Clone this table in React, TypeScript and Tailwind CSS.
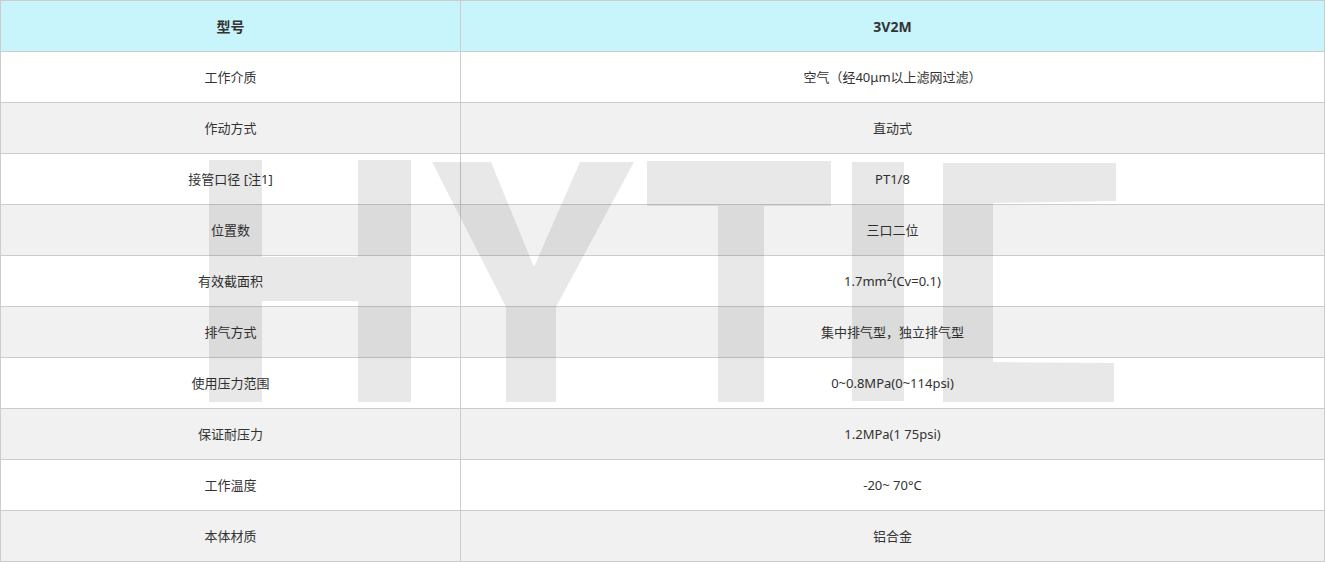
import React from "react";

const rows: [string, React.ReactNode][] = [
  ["工作介质", "空气（经40μm以上滤网过滤）"],
  ["作动方式", "直动式"],
  ["接管口径 [注1]", "PT1/8"],
  ["位置数", "三口二位"],
  [
    "有效截面积",
    <>
      1.7mm<sup className="text-[10px] relative -top-[5px]">2</sup>(Cv=0.1)
    </>,
  ],
  ["排气方式", "集中排气型，独立排气型"],
  ["使用压力范围", "0~0.8MPa(0~114psi)"],
  ["保证耐压力", "1.2MPa(1 75psi)"],
  ["工作温度", "-20~ 70°C"],
  ["本体材质", "铝合金"],
];

function Watermark() {
  const fill = "rgba(0,0,0,0.09)";
  return (
    <svg
      className="absolute left-0 top-0 pointer-events-none"
      width="1325"
      height="562"
      viewBox="0 0 1325 562"
    >
      {/* H */}
      <rect x="209" y="160" width="53" height="242" fill={fill} />
      <rect x="358" y="160" width="53" height="242" fill={fill} />
      <rect x="262" y="257" width="96" height="44" fill={fill} />
      {/* Y */}
      <polygon
        points="432,162 491,162 534,267 580,162 634,162 556,307 556,402 506,402 506,307"
        fill={fill}
      />
      {/* T */}
      <rect x="647" y="161" width="184" height="45" fill={fill} />
      <rect x="718" y="206" width="46" height="196" fill={fill} />
      {/* I */}
      <rect x="852" y="162" width="52" height="239" fill={fill} />
      {/* C */}
      <polygon
        points="943,163 1116,163 1116,201 993,203 993,362 1114,363 1114,402 943,402"
        fill={fill}
      />
    </svg>
  );
}

export default function App() {
  return (
    <div
      className="relative w-[1325px] bg-white text-[#333] text-[13px]"
      style={{ fontFamily: '"Noto Sans", "Noto Sans CJK SC", sans-serif' }}
    >
      <div className="border border-[#cccccc]">
        <div className="flex h-[51px] border-b border-[#cccccc] bg-[#c8f4fc] font-bold text-[14px]">
          <div className="w-[460px] border-r border-[#cccccc] flex items-center justify-center">
            型号
          </div>
          <div className="flex-1 flex items-center justify-center">3V2M</div>
        </div>
        {rows.map(([k, v], i) => (
          <div
            key={i}
            className={`flex ${i === rows.length - 1 ? "h-[50px]" : "h-[51px] border-b border-[#cccccc]"} ${
              i % 2 === 1 ? "bg-[#f1f1f1]" : "bg-white"
            }`}
          >
            <div className="w-[460px] border-r border-[#cccccc] flex items-center justify-center leading-none">
              {k}
            </div>
            <div className="flex-1 flex items-center justify-center leading-none">
              <span>{v}</span>
            </div>
          </div>
        ))}
      </div>
      <Watermark />
    </div>
  );
}
